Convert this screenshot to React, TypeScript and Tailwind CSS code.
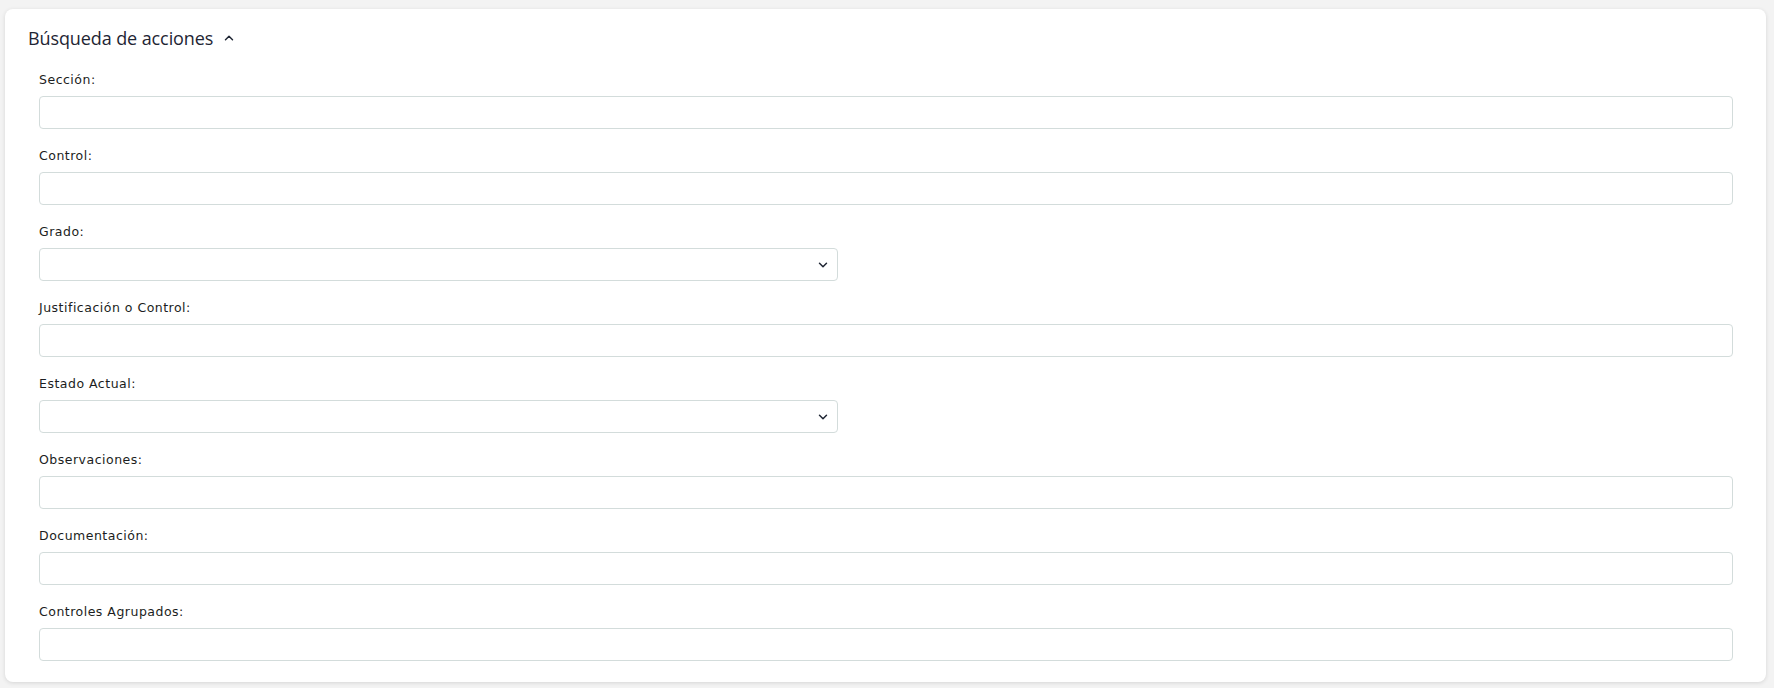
import { ChevronDown, ChevronUp } from "lucide-react";

const fields = [
  { label: "Sección:", type: "text" },
  { label: "Control:", type: "text" },
  { label: "Grado:", type: "select" },
  { label: "Justificación o Control:", type: "text" },
  { label: "Estado Actual:", type: "select" },
  { label: "Observaciones:", type: "text" },
  { label: "Documentación:", type: "text" },
  { label: "Controles Agrupados:", type: "text" },
];

const App = () => {
  return (
    <section
      className="min-h-[688px] bg-[#f3f3f3] pl-[5px] pr-[8px] pt-[9px] pb-[6px]"
      style={{ fontFamily: '"Open Sans", "Noto Sans", sans-serif' }}
    >
      <main className="rounded-lg bg-white px-[23px] pt-[15px] pb-[21px] shadow-[0_1px_4px_rgba(0,0,0,0.12)]">
        {/* Header */}
        <div className="flex items-center h-[28px]">
          <h2 className="text-[18px] leading-[28px] tracking-[-0.1px] text-[#1e2533]">
            Búsqueda de acciones
          </h2>
          <ChevronUp size={14} strokeWidth={2.5} className="ml-[9px] text-[#1e2533]" />
        </div>

        {/* Form */}
        <div className="mt-[19px] pl-[11px] pr-[10px] flex flex-col gap-[18px]">
          {fields.map((f) => (
            <div key={f.label} className="flex flex-col">
              <label className="font-['DejaVu_Sans',sans-serif] text-[12.5px] leading-[18px] tracking-[0.5px] text-[#1b1d21]">
                {f.label}
              </label>
              {f.type === "select" ? (
                <div className="relative mt-[7px] w-[799px]">
                  <select className="block appearance-none w-full h-[33px] rounded-[4px] border border-[#d3dcdb] bg-white px-3 text-[12px] outline-none">
                    <option></option>
                  </select>
                  <ChevronDown
                    size={14}
                    strokeWidth={2.5}
                    className="absolute right-[8px] top-[10px] text-[#1e2533] pointer-events-none"
                  />
                </div>
              ) : (
                <input
                  type="text"
                  className="block mt-[7px] w-full h-[33px] rounded-[4px] border border-[#d3dcdb] bg-white px-3 text-[12px] outline-none"
                />
              )}
            </div>
          ))}
        </div>
      </main>
    </section>
  );
};

export default App;
